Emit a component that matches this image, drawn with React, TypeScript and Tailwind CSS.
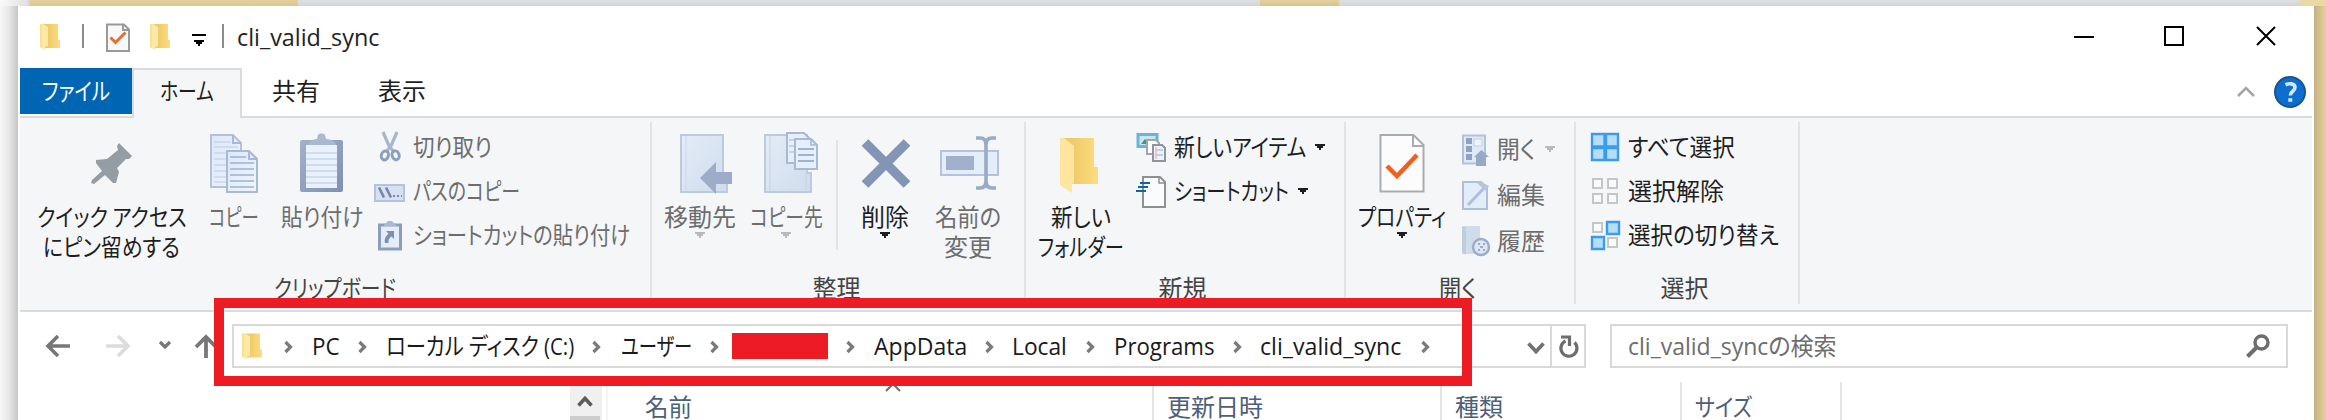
import { useLayoutEffect, useRef, useState } from "react";
import type { ReactNode } from "react";

const UI = "font-['Noto_Sans_CJK_JP',sans-serif] [font-feature-settings:'palt']";
const LATIN = "font-['Open_Sans','Noto_Sans_CJK_JP',sans-serif] [font-feature-settings:'palt']";

/** One line of text, condensed or widened to the width of its box. */
function Fit({ c, children, latin = false }: { c: string; children: string; latin?: boolean }) {
  const box = useRef<HTMLDivElement>(null);
  const line = useRef<HTMLSpanElement>(null);
  const [scale, setScale] = useState(1);
  useLayoutEffect(() => {
    if (box.current && line.current) setScale(box.current.clientWidth / line.current.offsetWidth);
  }, [children]);
  return (
    <div ref={box} className={`shrink-0 h-6 text-[24px] leading-6 ${latin ? LATIN : UI} ${c}`}>
      <span ref={line} className="inline-block whitespace-nowrap origin-left" style={{ transform: `scaleX(${scale})` }}>
        {children}
      </span>
    </div>
  );
}

function Svg({ c, box, children }: { c: string; box: string; children: ReactNode }) {
  return (
    <svg className={`shrink-0 overflow-visible ${c}`} viewBox={box} fill="none">
      {children}
    </svg>
  );
}

function Caret({ c = "" }: { c?: string }) {
  return (
    <Svg c={`w-[10px] h-[6px] ${c}`} box="0 0 10 6">
      <path d="M0 0h10v2H8v2H6v2H4V4H2V2H0z" fill="currentColor" />
    </Svg>
  );
}

function Folder({ c }: { c: string }) {
  return (
    <Svg c={c} box="0 0 20 26">
      <path d="M3 0h15v16h2v8H5z" fill="url(#fback)" />
      <path d="M0 0h3l5 3v19l-3 1v3l-5-3z" fill="#ffe9a6" />
      <path d="M0 0h2v24l-2-1z" fill="#ffe08a" />
    </Svg>
  );
}

function Crumb() {
  return (
    <Svg c="w-[10px] h-[14px] mt-[2px]" box="0 0 10 14">
      <path d="M1.500 2 6.500 7l-5 5" stroke="#7a7a7a" strokeWidth="3.200" />
    </Svg>
  );
}

function Big({ c, icon, lines, dim = false, caret = false }: { c: string; icon: ReactNode; lines: [string, string][]; dim?: boolean; caret?: boolean }) {
  return (
    <div className={`flex shrink-0 flex-col items-center pt-[14px] ${dim ? "text-[#6d6d6d]" : "text-[#1e1e1e]"} ${c}`}>
      <div className="h-[62px] flex">{icon}</div>
      <div className="mt-[10px] flex flex-col items-center gap-[6px]">
        {lines.map(([t, w]) => (
          <Fit key={t} c={w}>{t}</Fit>
        ))}
      </div>
      {caret && <Caret c={dim ? "mt-1 text-[#b9b9b9]" : "mt-1"} />}
    </div>
  );
}

function Small({ icon, t, w, box = "w-[34px]", row = "h-[44px]", dim = false, caret = false, gap = "ml-[6px]" }: { icon: ReactNode; t: string; w: string; box?: string; row?: string; dim?: boolean; caret?: boolean; gap?: string }) {
  return (
    <div className={`flex items-center ${row} ${dim ? "text-[#6d6d6d]" : "text-[#1e1e1e]"}`}>
      <div className={`flex shrink-0 justify-center ${box}`}>{icon}</div>
      <Fit c={`${w} ${gap} -mt-[2px]`}>{t}</Fit>
      {caret && <Caret c={dim ? "ml-[9px] text-[#b9b9b9]" : "ml-[9px]"} />}
    </div>
  );
}

function Group({ c, label, w, children }: { c: string; label: string; w: string; children: ReactNode }) {
  return (
    <div className={`flex shrink-0 ${c}`}>
      <div className="flex grow flex-col items-center text-[#444]">
        <div className="flex h-[157px] w-full">{children}</div>
        <Fit c={w}>{label}</Fit>
      </div>
      <div className="mt-1 h-[182px] w-[2px] bg-[#e1e3e5]" />
    </div>
  );
}

function Defs() {
  return (
    <svg className="absolute h-0 w-0">
      <defs>
        <linearGradient id="fback" x1="0" y1="0" x2="1" y2="0"><stop offset=".3" stopColor="#efca68" /><stop offset="1" stopColor="#fddd80" /></linearGradient>
        <linearGradient id="page" x1="0" y1="0" x2="1" y2="1"><stop stopColor="#dce8f8" /><stop offset="1" stopColor="#eef4fd" /></linearGradient>
        <linearGradient id="sheet" x1="0" y1="0" x2="1" y2="1"><stop stopColor="#e3ecf8" /><stop offset="1" stopColor="#d0dcec" /></linearGradient>
        <linearGradient id="board" x1="0" y1="0" x2="1" y2="1"><stop stopColor="#a3b1ca" /><stop offset="1" stopColor="#7f90b1" /></linearGradient>
      </defs>
    </svg>
  );
}

const Pin = (
  <Svg c="w-[60px] h-[62px]" box="82 132 60 62">
    <path d="M119 143 132 156 129 159H126L117 168 119 172 116 183H113L105 175 94 184 91 183 92 180 102 171 96 163V160L107 159 118 150 117 146Z" fill="#939da3" />
  </Svg>
);
const Copy = (
  <Svg c="w-[60px] h-[62px]" box="204 132 60 62">
    <path d="M211 135h22l8 8v44h-30z" fill="url(#page)" stroke="#b3c1da" strokeWidth="2" />
    <path d="M214 142h17M214 147h24M214 153h24M214 159h12M214 165h12M214 171h12M214 177h12M214 182h12" stroke="#c9d6e9" strokeWidth="1.5" />
    <path d="M227 151h22l8 8v33h-30z" fill="url(#page)" stroke="#a9b8d4" strokeWidth="2" />
    <path d="M249 151v8h8M233 135v8h8" stroke="#a9b8d4" strokeWidth="2" />
    <path d="M230 157h16M230 163h24M230 169h24M230 175h24M230 181h24M230 187h24" stroke="#9fb1d0" strokeWidth="1.5" />
  </Svg>
);
const Paste = (
  <Svg c="w-[60px] h-[62px]" box="292 132 60 62">
    <rect x="300" y="140" width="43" height="52" rx="2" fill="url(#board)" />
    <rect x="306" y="145" width="31" height="43" fill="#e9f1fc" />
    <path d="M306 153h31M306 159h31M306 165h31M306 171h31M306 177h31M306 183h31" stroke="#cfdcee" strokeWidth="1.8" />
    <path d="M308 145c1-4 6-6 9-6l1-4c1-2 6-2 7 0l1 4c4 0 9 2 10 6z" fill="#a9b9d2" />
  </Svg>
);
const Cut = (
  <Svg c="w-[20px] h-[30px]" box="380 133 20 30">
    <path d="M383 133 389 147 394 153M397 133 391 147 386 153" stroke="#a9b6ca" strokeWidth="3.200" />
    <ellipse cx="385" cy="156.500" rx="3.500" ry="4.500" stroke="#8d9fc0" strokeWidth="3" transform="rotate(18 385 156)" />
    <ellipse cx="395.500" cy="156.500" rx="3.500" ry="4.500" stroke="#8d9fc0" strokeWidth="3" transform="rotate(-18 395 156)" />
  </Svg>
);
const PathIcon = (
  <Svg c="w-[32px] h-[20px] mt-[3px]" box="374 183 32 20">
    <path d="M375 185h29v16h-29z" fill="#d5e1f1" stroke="#b4c3da" strokeWidth="2" />
    <path d="M379 187.500 384 197.500M386 187.500 391 197.500" stroke="#7387ac" strokeWidth="2.6" />
    <path d="M393 196h2M397 196h2M401 196h1" stroke="#7387ac" strokeWidth="2" />
  </Svg>
);
const PasteLink = (
  <Svg c="w-[24px] h-[30px]" box="378 220 24 30">
    <rect x="379.500" y="225" width="21" height="24" fill="#e4edf9" stroke="#8d9ebd" strokeWidth="3" />
    <path d="M384 226c0-3 3-3 4-5h4c1 2 4 2 4 5z" fill="#a9b9d2" />
    <path d="M386 231h8v8l-2.500-2.500c-3 2-3 4-3 6.500h-3.500c-1-4 1-7 3.500-9.500z" fill="#7d90b4" />
  </Svg>
);
const Move = (
  <Svg c="w-[60px] h-[62px]" box="670 132 60 62">
    <path d="M681 135h42v38h4v19h-46z" fill="url(#sheet)" stroke="#bccadd" strokeWidth="2" />
    <path d="M686 136v55" stroke="#cbd8e9" />
    <path d="m700 178 16-16v10h16v12h-16v10z" fill="#9dadc9" />
  </Svg>
);
const CopyTo = (
  <Svg c="w-[60px] h-[62px]" box="756 132 60 62">
    <path d="M765 135h42v38h4v19h-46z" fill="url(#sheet)" stroke="#bccadd" strokeWidth="2" />
    <path d="M770 136v55M806 172v19" stroke="#c4d2e5" />
    <path d="M787 133h17l6 6v24h-23z" fill="#e6effb" stroke="#a9b9d3" strokeWidth="2" />
    <path d="M789 140h14M789 146h14M789 152h14" stroke="#bac9df" strokeWidth="1.6" />
    <path d="M795 139h16l6 6v24h-22z" fill="#e6effb" stroke="#a9b9d3" strokeWidth="2" />
    <path d="M811 139v6h6" stroke="#a9b9d3" strokeWidth="1.6" />
    <path d="M798 149h16M798 155h16M798 161h16" stroke="#9fb1cf" strokeWidth="2" />
  </Svg>
);
const Delete = (
  <Svg c="w-[60px] h-[62px]" box="855 132 60 62">
    <path d="m865 142.500 42 42M907 142.500l-42 42" stroke="#8395b5" strokeWidth="9.500" />
  </Svg>
);
const Rename = (
  <Svg c="w-[60px] h-[62px]" box="938 132 60 62">
    <path d="M941 151h57v24h-57z" fill="#e4edfa" stroke="#b5c3da" strokeWidth="2" />
    <path d="M946 156h28v14h-28z" fill="#a1b0cb" />
    <path d="M976 138h4q6 0 6 7v36q0 7-6 7h-4M996 138h-4q-6 0-6 7v36q0 7 6 7h4" stroke="#9aaac6" strokeWidth="3.600" />
  </Svg>
);
const NewFolder = (
  <Svg c="w-[60px] h-[62px]" box="1051 132 60 62">
    <path d="M1063 138h31v29h4v17h-36z" fill="url(#fback)" />
    <path d="M1060 138h4l10 8v37l-2 1v9l-12-8z" fill="#ffe59d" />
  </Svg>
);
const NewItem = (
  <Svg c="w-[30px] h-[30px]" box="1136 132 30 30">
    <path d="M1138 134.500h19v12h-19z" fill="#c6e6f3" stroke="#6db4d2" strokeWidth="3" />
    <path d="M1141 144l4-5 4 5z" fill="#4f9080" />
    <path d="M1147 140h9l3 3v11h-12z" fill="#fff" stroke="#a5a5a5" strokeWidth="2" />
    <path d="M1153 145h9l3 3v13h-12z" fill="#eef2fa" stroke="#8f9499" strokeWidth="2" />
    <path d="M1155 150h8M1155 155h8" stroke="#a7c6ec" strokeWidth="1.500" /><path d="M1156 147v12" stroke="#f3b9b9" strokeWidth="1.500" />
  </Svg>
);
const Shortcut = (
  <Svg c="w-[30px] h-[32px] mt-[2px]" box="1136 176 30 32">
    <path d="M1143 177h17l5 5v25h-22z" fill="#fafbfb" stroke="#8e9194" strokeWidth="2" />
    <path d="M1159 177v6h6" stroke="#8e9194" strokeWidth="1.500" />
    <path d="M1140 183h10M1138 187h10M1136 191h10" stroke="#0f63a9" strokeWidth="2" />
  </Svg>
);
const Props = (
  <Svg c="w-[60px] h-[62px]" box="1372 132 60 62">
    <path d="M1380.500 135h33l10 10v46.500h-43z" fill="#fcfcfc" stroke="#a9acae" strokeWidth="2" />
    <path d="M1413 135v11h11" stroke="#a9acae" strokeWidth="2" />
    <path d="m1387 166 10 10 20-21" stroke="#f05f1e" strokeWidth="4.500" />
  </Svg>
);
const OpenIcon = (
  <Svg c="w-[26px] h-[32px] mt-[2px]" box="1462 134 26 32">
    <path d="M1463 135.500h22v28h-22z" fill="#dfe9f7" stroke="#b3c2da" strokeWidth="2" />
    <path d="M1466 138h6v6h-6zM1466 146h6v6h-6zM1466 154h6v6h-6z" fill="#8fa1c0" />
    <path d="M1474 139h8v7h-8z" fill="#eef4fc" stroke="#c2cfe2" />
    <path d="m1481.500 150 7.500 7h-3v9h-10v-9h-2z" fill="#98a9c6" />
  </Svg>
);
const EditIcon = (
  <Svg c="w-[26px] h-[30px]" box="1462 180 26 30">
    <path d="M1463 182h18l6 6v21h-24z" fill="#e3ecf9" stroke="#b0bfd8" strokeWidth="2" />
    <path d="m1468 205 18-19" stroke="#b0bfd8" strokeWidth="3" /><path d="M1479 181l10 5-3 5-9-8z" fill="#b5c4dc" />
  </Svg>
);
const History = (
  <Svg c="w-[28px] h-[30px] ml-[2px]" box="1462 228 28 30">
    <path d="M1462 228h18v28h-18z" fill="#cfdcec" /><path d="M1462 229h4v28l-4-3z" fill="#becddf" />
    <circle cx="1481" cy="249" r="8" fill="#dce6f4" stroke="#9dadc8" strokeWidth="2.500" />
    <path d="M1478 246h2M1483 246h2M1480 249h3M1478 252h2M1483 252h2" stroke="#9dadc8" strokeWidth="2" />
  </Svg>
);
const AllIcon = (
  <Svg c="w-[30px] h-[30px]" box="0 0 30 30">
    <path d="M2 2h12.500v12.500H2zM16 2h12v12.500H16zM2 16h12.500v12H2zM16 16h12v12H16z" fill="#b5defc" stroke="#3c9ceb" strokeWidth="2.400" />
  </Svg>
);
const NoneIcon = (
  <Svg c="w-[30px] h-[30px]" box="0 0 30 30">
    <path d="M3 3h9v9H3zM18 3h9v9h-9zM3 18h9v9H3zM18 18h9v9h-9z" fill="#fafafa" stroke="#c6c6c6" strokeWidth="2" />
  </Svg>
);
const InvertIcon = (
  <Svg c="w-[30px] h-[30px]" box="0 0 30 30">
    <path d="M3 3h9v9H3zM18 18h9v9h-9z" fill="#fafafa" stroke="#c6c6c6" strokeWidth="2" />
    <path d="M17 2h12v12H17zM2 17h12v12H2z" fill="#b5defc" stroke="#3c9ceb" strokeWidth="2.400" />
  </Svg>
);

function TitleBar() {
  return (
    <div className="flex h-[62px] pl-[22px]">
      <Folder c="w-[20px] h-[26px] mt-[18px]" />
      <div className="ml-[22px] mt-[18px] h-6 w-[2px] bg-[#8c8c8c]" />
      <Svg c="w-[24px] h-[30px] ml-[22px] mt-[17px]" box="0 0 24 30">
        <path d="M1 1.500h17l5 5V28H1z" fill="#f7f8f9" stroke="#999" strokeWidth="2" />
        <path d="M17 1.500V7h6" stroke="#999" strokeWidth="2" />
        <path d="m4.500 14.500 5 5 10-10" stroke="#f06a2b" strokeWidth="3" />
      </Svg>
      <Folder c="w-[20px] h-[26px] mt-[18px] ml-[20px]" />
      <Svg c="w-[14px] h-[12px] ml-[22px] mt-[28px]" box="0 0 14 12">
        <path d="M0 0h14v2H0zM2 6h10v2h-2v2H8v2H6v-2H4V8H2z" fill="#000" />
      </Svg>
      <div className="ml-[16px] mt-[18px] h-6 w-[2px] bg-[#8c8c8c]" />
      <Fit latin c="w-[142px] ml-[13px] mt-[19px] text-[#222]">cli_valid_sync</Fit>
      <Svg c="w-[202px] h-[20px] ml-auto mr-[38px] mt-[20px]" box="2074 26 202 20">
        <path d="M2074 37h20M2165 27h18v18h-18zM2257 27l18 18M2275 27l-18 18" stroke="#000" strokeWidth="2" />
      </Svg>
    </div>
  );
}

function Tabs() {
  return (
    <div className="flex h-[50px] px-[2px]">
      <div className="flex h-[50px] w-[112px] flex-col border-b-2 border-[#dadbdc]">
        <div className="flex h-[46px] justify-center bg-[#0066b4] pt-[10px]">
          <Fit c="w-[68px] text-white">ファイル</Fit>
        </div>
      </div>
      <div className="flex w-[110px] justify-center border-x-2 border-t-2 border-[#dadbdc] bg-[#f4f6f8] pt-2">
        <Fit c="w-[54px] text-[#1e1e1e]">ホーム</Fit>
      </div>
      <div className="flex grow border-b-2 border-[#dadbdc] pt-[10px] text-[#1e1e1e]">
        <Fit c="w-[48px] ml-[30px]">共有</Fit>
        <Fit c="w-[48px] ml-[58px]">表示</Fit>
        <Svg c="w-[18px] h-[11px] ml-auto mt-[8px]" box="0 0 18 11">
          <path d="m1 10 8-8 8 8" stroke="#a6a6a6" strokeWidth="2.600" />
        </Svg>
        <Svg c="w-[32px] h-[32px] ml-[19px] mr-[6px] -mt-[2px]" box="0 0 32 32">
          <circle cx="16" cy="16" r="15" fill="#0b6ed0" stroke="#17548c" strokeWidth="2" />
          <path d="M11.500 8.800c3-1.500 9.500-1.800 9.500 2.700 0 4-4.700 3.500-4.700 8M14.300 24h4" stroke="#d6e6f5" strokeWidth="3.600" />
        </Svg>
      </div>
    </div>
  );
}

function Ribbon() {
  return (
    <div className="mx-[2px] flex h-[194px] border-b-2 border-[#dadbdc] bg-[#f4f6f8]">
      <Group c="w-[632px]" label="クリップボード" w="w-[122px]">
        <Big c="w-[183px]" icon={Pin} lines={[["クイック アクセス", "w-[150px]"], ["にピン留めする", "w-[137px]"]]} />
        <Big c="w-[62px]" dim icon={Copy} lines={[["コピー", "w-[50px]"]]} />
        <Big c="w-[100px] ml-[7px]" dim icon={Paste} lines={[["貼り付け", "w-[82px]"]]} />
        <div className="pt-[7px]">
          <Small dim box="w-[36px]" gap="ml-[5px]" icon={Cut} t="切り取り" w="w-[79px]" />
          <Small dim box="w-[36px]" gap="ml-[5px]" icon={PathIcon} t="パスのコピー" w="w-[107px]" />
          <Small dim box="w-[36px]" gap="ml-[5px]" icon={PasteLink} t="ショートカットの貼り付け" w="w-[217px]" />
        </div>
      </Group>
      <Group c="w-[374px]" label="整理" w="w-[48px] mr-[3px]">
        <Big c="w-[84px] ml-[6px]" dim caret icon={Move} lines={[["移動先", "w-[72px]"]]} />
        <Big c="w-[84px] ml-[2px]" dim caret icon={CopyTo} lines={[["コピー先", "w-[73px]"]]} />
        <div className="ml-[8px] mt-[22px] h-[110px] w-[2px] bg-[#e1e3e5]" />
        <Big c="w-[82px] ml-[6px]" caret icon={Delete} lines={[["削除", "w-[48px]"]]} />
        <Big c="w-[84px]" dim icon={Rename} lines={[["名前の", "w-[66px]"], ["変更", "w-[48px]"]]} />
      </Group>
      <Group c="w-[320px]" label="新規" w="w-[48px] mr-[5px]">
        <Big c="w-[102px] ml-[4px]" icon={NewFolder} lines={[["新しい", "w-[60px]"], ["フォルダー", "w-[86px]"]]} />
        <div className="ml-[2px] pt-[7px]">
          <Small caret icon={NewItem} t="新しいアイテム" w="w-[132px]" />
          <Small caret icon={Shortcut} t="ショートカット" w="w-[115px]" />
        </div>
      </Group>
      <Group c="w-[230px]" label="開く" w="w-[38px] mr-[4px]">
        <Big c="w-[100px] ml-[6px]" caret icon={Props} lines={[["プロパティ", "w-[88px]"]]} />
        <div className="ml-[7px] pt-[8px]">
          <Small dim caret box="w-[32px]" row="h-[46px]" icon={OpenIcon} t="開く" w="w-[39px]" />
          <Small dim box="w-[32px]" row="h-[46px]" icon={EditIcon} t="編集" w="w-[48px]" />
          <Small dim box="w-[32px]" row="h-[46px]" icon={History} t="履歴" w="w-[48px]" />
        </div>
      </Group>
      <Group c="w-[224px]" label="選択" w="w-[48px] mr-[5px]">
        <div className="ml-[12px] pt-[7px]">
          <Small icon={AllIcon} t="すべて選択" w="w-[107px]" />
          <Small icon={NoneIcon} t="選択解除" w="w-[96px]" />
          <Small icon={InvertIcon} t="選択の切り替え" w="w-[151px]" />
        </div>
      </Group>
    </div>
  );
}

function AddressBar() {
  return (
    <div className="flex h-[70px] pt-[12px]">
      <div className="flex w-[214px] shrink-0 pl-[28px] pt-[10px]">
        <Svg c="w-[172px] h-[24px]" box="46 334 172 24">
          <path d="M48 346h22M58 336l-10 10 10 10" stroke="#777" strokeWidth="3.600" />
          <path d="M106 346h22M118 336l10 10-10 10" stroke="#dcdcdc" strokeWidth="3.600" />
          <path d="m160 342 5 5 5-5" stroke="#777" strokeWidth="3.200" />
          <path d="M206 358v-21M196 347l10-10 10 10" stroke="#777" strokeWidth="3.800" />
        </Svg>
      </div>
      <div className="flex h-[44px] w-[1354px] shrink-0 border-2 border-[#d9d9d9]">
        <div className="flex w-[1318px] items-center border-r-2 border-[#d9d9d9] pl-[8px] text-[#1a1a1a]">
          <Folder c="w-[20px] h-[27px]" />
          <div className="ml-[22px] flex items-center">
            <Crumb />
            <Fit latin c="w-[28px] ml-[18px]">PC</Fit>
            <div className="w-[18px]" />
            <Crumb />
            <Fit latin c="w-[188px] ml-[18px]">ローカル ディスク (C:)</Fit>
            <div className="w-[18px]" />
            <Crumb />
            <Fit latin c="w-[71px] ml-[19px]">ユーザー</Fit>
            <div className="w-[18px]" />
            <Crumb />
            <div className="ml-[12px] h-[26px] w-[96px] bg-[#ed1c24]" />
            <div className="w-[18px]" />
            <Crumb />
            <Fit latin c="w-[93px] ml-[18px]">AppData</Fit>
            <div className="w-[18px]" />
            <Crumb />
            <Fit latin c="w-[55px] ml-[17px]">Local</Fit>
            <div className="w-[19px]" />
            <Crumb />
            <Fit latin c="w-[101px] ml-[18px]">Programs</Fit>
            <div className="w-[18px]" />
            <Crumb />
            <Fit latin c="w-[141px] ml-[17px]">cli_valid_sync</Fit>
            <div className="w-[20px]" />
            <Crumb />
          </div>
          <Svg c="w-[18px] h-[12px] ml-auto mr-[5px] mt-[4px]" box="0 0 18 12">
            <path d="m1.500 1.500 7.500 8 7.500-8" stroke="#707070" strokeWidth="3.600" />
          </Svg>
        </div>
        <Svg c="w-[20px] h-[24px] ml-[7px] mt-[9px]" box="0 0 20 24">
          <path d="M15.500 7.500a8 8 0 1 1-9-1.500" stroke="#6d6d6d" strokeWidth="3.200" />
          <path d="M2 2h8.500v9" stroke="#6d6d6d" strokeWidth="3.200" />
        </Svg>
      </div>
      <div className="ml-[24px] flex h-[44px] w-[678px] shrink-0 items-center border-2 border-[#d9d9d9] pl-[16px] pr-[16px] text-[#6d6d6d]">
        <Fit latin c="w-[209px]">cli_valid_syncの検索</Fit>
        <Svg c="w-[24px] h-[24px] ml-auto" box="0 0 24 24">
          <circle cx="15.500" cy="8.500" r="6.500" stroke="#6d6d6d" strokeWidth="3.400" />
          <path d="M11 13 1.500 22.500" stroke="#6d6d6d" strokeWidth="4" />
        </Svg>
      </div>
    </div>
  );
}

function Columns() {
  return (
    <div className="flex h-[38px] text-[#4c607a]">
      <div className="ml-[552px] flex h-[38px] w-[32px] flex-col bg-[#f0f0f0]">
        <Svg c="w-[16px] h-[11px] mt-[14px] ml-[7px]" box="0 0 16 11">
          <path d="m1.500 9.500 6.500-7 6.500 7" stroke="#5c5c5c" strokeWidth="3.600" />
        </Svg>
        <div className="mt-auto h-1 w-[30px] bg-[#cdcdcd]" />
      </div>
      <div className="ml-[4px] w-[2px] bg-[#f5f5f5]" />
      <Fit c="w-[47px] ml-[37px] mt-[12px]">名前</Fit>
      <Svg c="w-[16px] h-[8px] ml-[193px] mt-[1px]" box="0 0 16 8">
        <path d="m1 8 7-7 7 7" stroke="#707070" strokeWidth="2" />
      </Svg>
      <div className="ml-[251px] w-[2px] bg-[#e5e5e5]" />
      <Fit c="w-[96px] ml-[13px] mt-[12px]">更新日時</Fit>
      <div className="ml-[177px] w-[2px] bg-[#e5e5e5]" />
      <Fit c="w-[48px] ml-[13px] mt-[12px]">種類</Fit>
      <div className="ml-[177px] w-[2px] bg-[#e5e5e5]" />
      <Fit c="w-[57px] ml-[13px] mt-[12px]">サイズ</Fit>
      <div className="ml-[88px] w-[2px] bg-[#e5e5e5]" />
    </div>
  );
}

export default function App() {
  return (
    <div className="relative h-[420px] w-[2326px] overflow-hidden bg-white">
      <Defs />
      <div className="flex h-[6px]">
        <div className="w-[28px] bg-linear-to-r from-[#fafafa] to-[#e0e0e0]" />
        <div className="w-[2px] bg-[#d3d6de]" />
        <div className="w-[268px] bg-linear-to-b from-[#e5d19c] to-[#dcc790]" />
        <div className="w-[962px] bg-linear-to-b from-[#dde0e3] to-[#d2d5d8]" />
        <div className="w-[79px] bg-linear-to-b from-[#e5d19c] to-[#d8c38c]" />
        <div className="w-[961px] bg-linear-to-b from-[#dde0e3] to-[#d2d5d8]" />
        <div className="w-[26px] bg-[#ecd8a2]" />
      </div>
      <div className="flex h-[414px]">
        <div className="w-[18px] bg-linear-to-r from-[#f8f8f8] via-[#e6e6e6] to-[#c6c6c6]" />
        <div className="flex w-[2296px] flex-col bg-white">
          <TitleBar />
          <Tabs />
          <Ribbon />
          <AddressBar />
          <Columns />
        </div>
        <div className="w-[12px] bg-linear-to-r from-[#c5b284] to-[#e6d19b]" />
      </div>
      <div className="absolute left-[214px] top-[298px] h-[88px] w-[1258px] border-[10px] border-[#ed1c24]" />
    </div>
  );
}
